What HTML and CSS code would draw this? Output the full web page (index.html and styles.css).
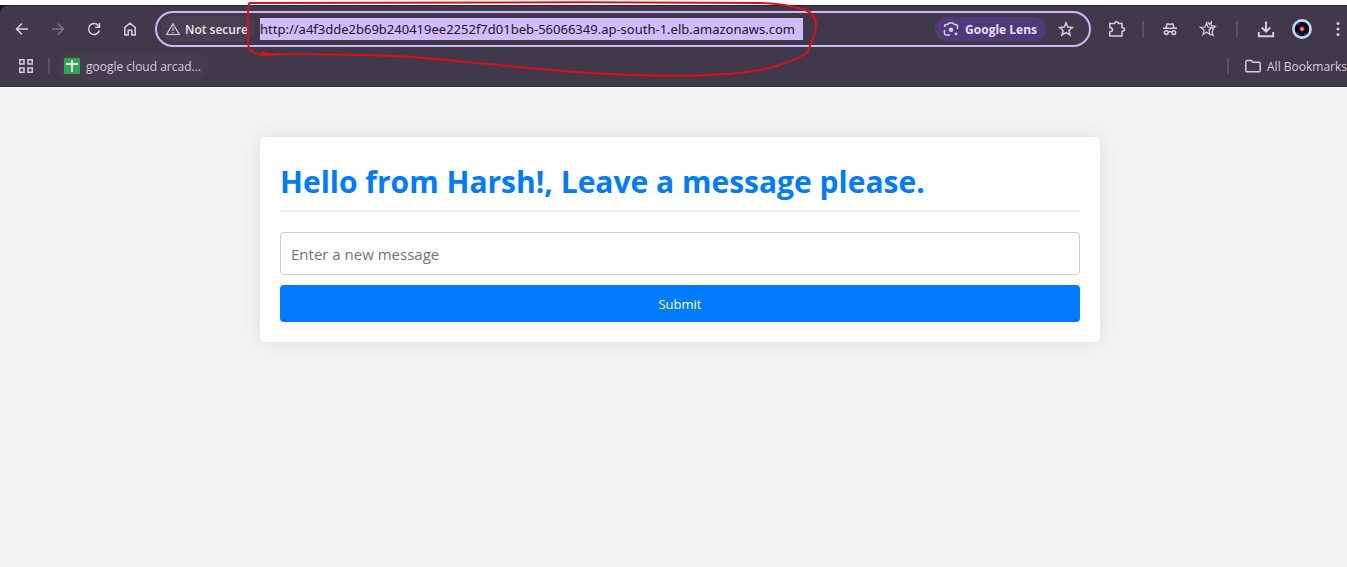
FILE: index.html
```html
<!DOCTYPE html>
<html lang="en">
<head>
<meta charset="utf-8">
<title>Messages</title>
<link rel="stylesheet" href="styles.css">
</head>
<body>
<header class="chrome">
  <div class="chrome-body">
    <nav class="toolbar" aria-label="Browser toolbar">
      <button class="tool" aria-label="Back"><svg width="16" height="16" viewBox="0 0 16 16"><path d="M14 8H3M8 2.500L2.500 8L8 13.500"/></svg></button>
      <button class="tool dim" aria-label="Forward"><svg width="16" height="16" viewBox="0 0 16 16"><path d="M2 8H13M8 2.500L13.500 8L8 13.500"/></svg></button>
      <button class="tool" aria-label="Reload"><svg width="16" height="16" viewBox="0 0 16 16"><path d="M13.400 9.500A5.500 5.500 0 1 1 12.300 4.400L13.500 6M13.500 2V6.200H9.300"/></svg></button>
      <button class="tool" aria-label="Home"><svg width="16" height="16" viewBox="0 0 16 16"><path d="M2.800 6.300L8 2.200L13.200 6.300V14H9.800V9.300H6.200V14H2.800Z"/></svg></button>
      <div class="omnibox">
        <button class="security"><svg width="16" height="16" viewBox="0 0 16 16"><path class="thin" d="M8 2.800L14.300 13.500H1.700Z"/><path class="thin" d="M8 6.500V10M8 11V12.200"/></svg>Not secure</button>
        <input class="url" type="text" aria-label="Address" value="http://a4f3dde2b69b240419ee2252f7d01beb-56066349.ap-south-1.elb.amazonaws.com">
        <button class="lens"><svg width="16" height="16" viewBox="0 0 16 16"><path d="M1.500 6V5.200Q1.500 3.500 3.200 3.500H4.800L6 2H10L11.200 3.500H12.800Q14.500 3.500 14.500 5.200V8M1.500 9V12.300Q1.500 14 3.200 14H7"/><circle class="solid" cx="8" cy="8.700" r="2.300"/><circle class="solid" cx="13" cy="13" r="1.400"/></svg>Google Lens</button>
        <button class="bookmark" aria-label="Bookmark this page"><svg width="16" height="16" viewBox="0 0 16 16"><path d="M8 1.800L9.800 6.100L14.400 6.500L10.900 9.500L12 14L8 11.600L4 14L5.100 9.500L1.600 6.500L6.200 6.100Z"/></svg></button>
      </div>
      <button class="tool" aria-label="Extensions"><svg width="18" height="18" viewBox="0 0 18 18"><path d="M1.800 3.500H6.500Q7 1.400 8.500 1.400T10.500 3.500H14V7.500Q16.500 8 16.500 9.500T14 11.500V16H1.800V12Q4.500 11.500 4.500 9.700T1.800 7.500Z"/></svg></button>
      <span class="rule"></span>
      <button class="tool" aria-label="Incognito extension"><svg width="16" height="16" viewBox="0 0 16 16"><path d="M4 7L5 3H6.500L8 3.500L9.500 3H11L12 7M1 7.300H15M6 11.200Q8 10 10 11.200"/><circle cx="4.300" cy="11.600" r="1.900"/><circle cx="11.700" cy="11.600" r="1.900"/></svg></button>
      <button class="tool starred" aria-label="Favorites extension"><svg width="18" height="18" viewBox="0 0 18 18"><path class="thin" d="M7.500 3L9 7L13 7.300L9.900 10L11 14.500L7.500 12L4 14.500L5.100 10L1.500 7.300L6 7ZM8.700 1.800L10.500 4.500L12.300 2V5.500L16.500 6.300L13 9.300M14.500 9L13 12L14.300 15.500L12 14.300"/></svg></button>
      <span class="rule wide"></span>
      <button class="tool" aria-label="Downloads"><svg width="18" height="18" viewBox="0 0 18 18"><path class="bold" d="M9 1.500V11.500M4.800 7.500L9 11.500L13.200 7.500M1.800 12V16.200H16.200V12"/></svg></button>
      <button class="tool" aria-label="Profile"><svg width="20" height="20" viewBox="0 0 20 20"><circle class="avatar" cx="10" cy="10" r="8.600"/><path class="speck" d="M5 6L7 4M14 15L12 16M5 13L6 15"/><circle class="halo" cx="10" cy="10" r="2.400"/><circle class="core" cx="10" cy="10" r="1"/></svg></button>
      <button class="menu" aria-label="Menu"><svg width="18" height="18" viewBox="0 0 18 18"><circle class="solid" cx="9" cy="3.500" r="1.500"/><circle class="solid" cx="9" cy="9" r="1.500"/><circle class="solid" cx="9" cy="14.500" r="1.500"/></svg></button>
    </nav>
    <nav class="bookmarks" aria-label="Bookmarks">
      <button class="tool" aria-label="Apps"><svg width="16" height="16" viewBox="0 0 16 16"><path d="M1.800 1.800H6V6H1.800ZM10 1.800H14.200V6H10ZM1.800 10H6V14.200H1.800ZM10 10H14.200V14.200H10Z"/></svg></button>
      <span class="rule flush"></span>
      <a class="saved" href="#"><svg width="16" height="16" viewBox="0 0 16 16"><rect class="sheet" width="16" height="16" rx="1"/><path class="cross" d="M2 6H14M8 2V14"/></svg>google cloud arcad...</a>
      <span class="rule far"></span>
      <button class="all"><svg width="16" height="16" viewBox="0 0 16 16"><path d="M.8 4V12.500Q.8 13.700 2 13.700H14Q15.200 13.700 15.200 12.500V5.500Q15.200 4.300 14 4.300H8L6.300 2.500H2Q.8 2.500 .8 4Z"/></svg>All Bookmarks</button>
    </nav>
  </div>
  <svg class="annotation" width="580" height="84" viewBox="0 0 580 84" aria-hidden="true"><path d="M9 3C7 18 8 32 8 44Q10 54 22 55L34 55M21 52Q27 55 36 54C90 55 130 54 170 57C240 62 290 70 370 74C430 77 480 77 520 70Q550 64 568 52C570 42 577 34 576 24Q575 12 562 9Q546 4 520 3C350 2 150 2 9 3"/></svg>
</header>
<main class="page">
  <section class="card">
    <h1 class="title">Hello from Harsh!, Leave a message please.</h1>
    <form class="form">
      <input class="field" type="text" aria-label="New message" placeholder="Enter a new message">
      <button class="submit" type="button">Submit</button>
    </form>
  </section>
</main>
</body>
</html>
```
FILE: styles.css
```css
* { box-sizing: border-box; }
body {
  margin: 0;
  background: #f4f4f4;
  font-family: "Open Sans", "Noto Sans", sans-serif;
  overflow-x: hidden;
}
button, input { font: inherit; margin: 0; }
button { border: 0; padding: 0; background: none; color: inherit; }

.chrome {
  position: relative;
  padding-top: 5px;
  background: linear-gradient(#fff 5px, #1b1722 5px);
  color: #d5cedd;
  font-size: 12px;
}
.chrome-body {
  background: #40384b;
  border-top: 1px solid #292430;
  border-bottom: 1px solid #352e3e;
  border-top-left-radius: 8px;
  padding-bottom: 6px;
}
.chrome svg {
  display: block;
  flex: none;
  fill: none;
  stroke: #d5cedd;
  stroke-width: 1.5;
}
.chrome .thin { stroke-width: 1.2; }
.chrome .bold { stroke-width: 2; }
.chrome .solid { fill: #d5cedd; stroke: none; }

.toolbar {
  display: flex;
  align-items: center;
  padding: 5px 0 5px 4px;
}
.tool {
  flex: none;
  width: 36px;
  height: 28px;
  display: grid;
  place-items: center;
}
.dim { opacity: .4; }
.starred { margin-left: 2px; }

.omnibox {
  flex: 1;
  min-width: 0;
  height: 36px;
  margin: 0 8px 0 7px;
  padding: 0 15px 0 4px;
  display: flex;
  align-items: center;
  border: 2px solid #cdb8f4;
  border-radius: 18px;
}
.security {
  flex: none;
  display: flex;
  align-items: center;
  gap: 4px;
  height: 26px;
  padding: 0 6px 0 4px;
  margin-right: 6px;
  border-radius: 13px;
  background: #483f50;
  color: #eee8f3;
  font-weight: 600;
}
.url {
  width: 543px;
  height: 22px;
  border: 0;
  padding: 0;
  background: #d0bcff;
  color: #1c1427;
  font-family: "Noto Sans", "Open Sans", sans-serif;
  font-size: 13px;
}
.lens {
  flex: none;
  display: flex;
  align-items: center;
  gap: 6px;
  height: 24px;
  margin-left: auto;
  padding: 0 9px 0 8px;
  border-radius: 12px;
  background: #4f3a7a;
  color: #eaddff;
  font-weight: 700;
}
.bookmark { margin-left: 12px; }

.rule {
  flex: none;
  width: 2px;
  height: 16px;
  margin: 0 8px 0 7px;
  background: #5a5166;
}
.rule.wide { margin: 0 10px; }
.rule.flush { margin: 0 8px 0 4px; }
.rule.far { margin: 0 16px 0 auto; }

.menu { flex: none; width: 18px; margin-left: 9px; }

.bookmarks {
  display: flex;
  align-items: center;
  padding-left: 8px;
}
.saved {
  display: flex;
  align-items: center;
  gap: 6px;
  height: 28px;
  padding: 0 8px 0 6px;
  border-radius: 14px;
  background: #463c4e;
  color: inherit;
  text-decoration: none;
}
.all {
  display: flex;
  align-items: center;
  gap: 6px;
}
.chrome .sheet { fill: #2da94f; stroke: none; }
.chrome .cross { stroke: #fff; stroke-width: 2; }
.chrome .avatar { fill: #0c0c16; stroke: #bddcf8; stroke-width: 2.6; }
.chrome .speck { stroke: #3f5268; stroke-width: 1.5; }
.chrome .halo { fill: #e8375a; stroke: none; }
.chrome .core { fill: #ffc5cf; stroke: none; }

.chrome .annotation {
  position: absolute;
  top: 0;
  left: 240px;
  stroke: #dc0f18;
  stroke-width: 2;
  pointer-events: none;
}

/* The left gutter offsets the centred card from the window's middle. */
.page { padding: 50px 0 50px 13px; }
.card {
  max-width: 840px;
  margin: 0 auto;
  padding: 20px;
  background: #fff;
  border-radius: 5px;
  box-shadow: 0 0 20px rgba(0, 0, 0, .1);
}
.title {
  margin: 0 0 20px;
  padding: 4px 0 8px;
  border-bottom: 2px solid #eee;
  color: #007bff;
  font-size: 30px;
  line-height: 41px;
}
.form {
  display: flex;
  flex-direction: column;
  gap: 10px;
}
.field {
  height: 43px;
  padding: 0 10px;
  border: 1px solid #ccc;
  border-radius: 4px;
  font-size: 15px;
}
.field::placeholder { color: #757575; }
.submit {
  height: 37px;
  border-radius: 4px;
  background: #007bff;
  color: #fff;
  font-size: 13px;
}
```
